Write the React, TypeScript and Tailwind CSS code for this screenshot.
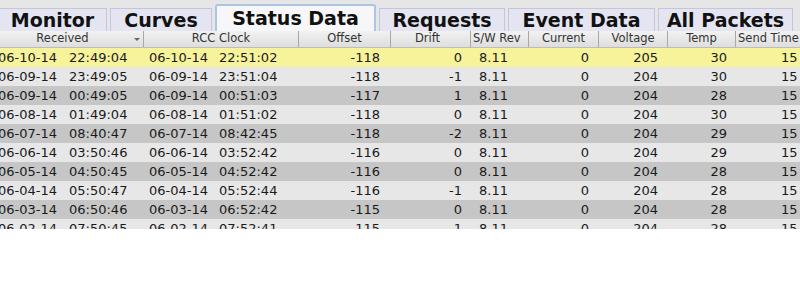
import React from "react";

const tabs = [
  { name: "Monitor", w: "w-[109px]" },
  { name: "Curves", w: "w-[102px]" },
  { name: "Status Data", w: "w-[161px]", active: true },
  { name: "Requests", w: "w-[126px]" },
  { name: "Event Data", w: "w-[147px]" },
  { name: "All Packets", w: "w-[135px]" },
];

const rows = [
  ["06-10-14", "22:49:04", "06-10-14", "22:51:02", "-118", "0", "8.11", "0", "205", "30", "15"],
  ["06-09-14", "23:49:05", "06-09-14", "23:51:04", "-118", "-1", "8.11", "0", "204", "30", "15"],
  ["06-09-14", "00:49:05", "06-09-14", "00:51:03", "-117", "1", "8.11", "0", "204", "28", "15"],
  ["06-08-14", "01:49:04", "06-08-14", "01:51:02", "-118", "0", "8.11", "0", "204", "30", "15"],
  ["06-07-14", "08:40:47", "06-07-14", "08:42:45", "-118", "-2", "8.11", "0", "204", "29", "15"],
  ["06-06-14", "03:50:46", "06-06-14", "03:52:42", "-116", "0", "8.11", "0", "204", "29", "15"],
  ["06-05-14", "04:50:45", "06-05-14", "04:52:42", "-116", "0", "8.11", "0", "204", "28", "15"],
  ["06-04-14", "05:50:47", "06-04-14", "05:52:44", "-116", "-1", "8.11", "0", "204", "28", "15"],
  ["06-03-14", "06:50:46", "06-03-14", "06:52:42", "-115", "0", "8.11", "0", "204", "28", "15"],
  ["06-02-14", "07:50:45", "06-02-14", "07:52:41", "-115", "-1", "8.11", "0", "204", "28", "15"],
];

const headers = [
  { name: "Received", w: "w-[143px]", cls: "justify-center pr-[18px]" },
  { name: "RCC Clock", w: "w-[155px]", cls: "justify-center" },
  { name: "Offset", w: "w-[92px]", cls: "justify-center" },
  { name: "Drift", w: "w-[80px]", cls: "justify-center pr-[6px]" },
  { name: "S/W Rev", w: "w-[58px]", cls: "justify-start pl-[2px]" },
  { name: "Current", w: "w-[70px]", cls: "justify-center" },
  { name: "Voltage", w: "w-[69px]", cls: "justify-center" },
  { name: "Temp", w: "w-[68px]", cls: "justify-center" },
  { name: "Send Time", w: "w-[80px]", cls: "justify-start pl-[2px]" },
];

const rowBg = (i: number) =>
  i === 0 ? "bg-[#f7f39b]" : i % 2 === 1 ? "bg-[#e7e7e7]" : "bg-[#c6c6c6]";

export default function App() {
  return (
    <div
      className="w-[800px] h-[300px] overflow-hidden bg-white"
      style={{ fontFamily: '"DejaVu Sans", Verdana, sans-serif' }}
    >
      {/* Tabs */}
      <div className="h-[31px] bg-[#e6e6e6] flex items-end gap-[3px] -ml-[2px]">
        {tabs.map((t) =>
          t.active ? (
            <div
              key={t.name}
              className={`${t.w} shrink-0 h-[27px] bg-[#f7f7fa] border-2 border-b-0 border-[#a9c6e6] rounded-t-[3px] flex items-center justify-center text-[19px] font-bold text-[#111] leading-none`}
            >
              {t.name}
            </div>
          ) : (
            <div
              key={t.name}
              className={`${t.w} shrink-0 h-[23px] bg-[#e4e5f1] border border-b-0 border-[#c3c6dc] flex items-center justify-center text-[19px] font-bold text-[#111] leading-none`}
            >
              {t.name}
            </div>
          )
        )}
      </div>

      {/* Header */}
      <div className="h-[17px] flex bg-gradient-to-b from-[#f2f2f2] to-[#dedede] border-b border-[#bdbdbd]">
        {headers.map((h, i) => (
          <div
            key={h.name}
            className={`${h.w} shrink-0 relative flex items-center text-[11.5px] text-[#333] whitespace-nowrap overflow-hidden ${h.cls} ${i > 0 ? "border-l border-[#a8a8a8]" : ""}`}
          >
            {h.name}
            {i === 0 && (
              <span className="absolute right-[3px] top-[7px] w-0 h-0 border-l-[3px] border-r-[3px] border-t-[3px] border-l-transparent border-r-transparent border-t-[#666]" />
            )}
          </div>
        ))}
      </div>

      {/* Rows */}
      <div className="h-[181px] overflow-hidden">
        {rows.map((r, i) => (
          <div
            key={i}
            className={`h-[19px] flex items-center text-[13px] text-[#1a1a1a] whitespace-nowrap ${rowBg(i)}`}
          >
            <div className="w-[143px] shrink-0 flex gap-[12px] -ml-[2px]">
              <span>{r[0]}</span>
              <span>{r[1]}</span>
            </div>
            <div className="w-[155px] shrink-0 flex gap-[11px] pl-[8px]">
              <span>{r[2]}</span>
              <span>{r[3]}</span>
            </div>
            <div className="w-[92px] shrink-0 text-right pr-[6px] -ml-[2px]">{r[4]}</div>
            <div className="w-[80px] shrink-0 text-right pr-[4px]">{r[5]}</div>
            <div className="w-[58px] shrink-0 pl-[13px]">{r[6]}</div>
            <div className="w-[70px] shrink-0 text-right pr-[5px]">{r[7]}</div>
            <div className="w-[69px] shrink-0 text-right pr-[5px]">{r[8]}</div>
            <div className="w-[68px] shrink-0 text-right pr-[4px]">{r[9]}</div>
            <div className="w-[80px] shrink-0 pl-[50px]">{r[10]}</div>
          </div>
        ))}
      </div>
    </div>
  );
}
